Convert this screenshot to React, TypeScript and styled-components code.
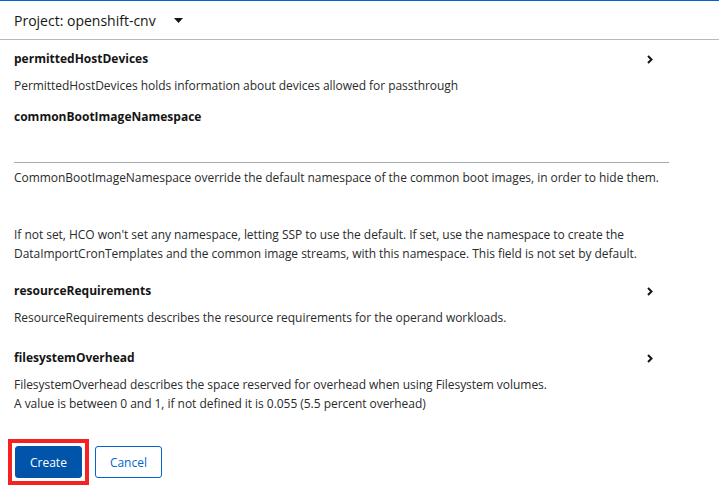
import React from "react";
import styled, { createGlobalStyle } from "styled-components";

const GlobalStyle = createGlobalStyle`
  html, body {
    margin: 0;
    padding: 0;
    background: #fff;
  }
  body {
    font-family: "Open Sans", "Noto Sans", sans-serif;
    color: #151515;
  }
`;

interface FieldData {
  name: string;
  description: string;
  expandable?: boolean;
  input?: boolean;
  spaceAfter: number;
}

const fields: FieldData[] = [
  {
    name: "permittedHostDevices",
    description:
      "PermittedHostDevices holds information about devices allowed for passthrough",
    expandable: true,
    spaceAfter: 12,
  },
  {
    name: "commonBootImageNamespace",
    description:
      "CommonBootImageNamespace override the default namespace of the common boot images, in order to hide them.\n\n\nIf not set, HCO won't set any namespace, letting SSP to use the default. If set, use the namespace to create the DataImportCronTemplates and the common image streams, with this namespace. This field is not set by default.",
    input: true,
    spaceAfter: 18,
  },
  {
    name: "resourceRequirements",
    description:
      "ResourceRequirements describes the resource requirements for the operand workloads.",
    expandable: true,
    spaceAfter: 21,
  },
  {
    name: "filesystemOverhead",
    description:
      "FilesystemOverhead describes the space reserved for overhead when using Filesystem volumes.\nA value is between 0 and 1, if not defined it is 0.055 (5.5 percent overhead)",
    expandable: true,
    spaceAfter: 0,
  },
];

const CaretDown = () => (
  <svg width="9" height="5" viewBox="0 0 9 5">
    <path d="M0 0 L9 0 L4.5 5 Z" fill="#151515" />
  </svg>
);

const ChevronRight = () => (
  <svg width="6" height="9" viewBox="0 0 6 9">
    <path
      d="M1 1 L4.5 4.5 L1 8"
      fill="none"
      stroke="#151515"
      strokeWidth="2"
    />
  </svg>
);

export default function App() {
  return (
    <>
      <GlobalStyle />
      <Page>
        <ProjectBar>
          <ProjectToggle>
            Project: openshift-cnv
            <CaretDown />
          </ProjectToggle>
        </ProjectBar>
        <Form>
          {fields.map((f) => (
            <Field key={f.name} $spaceAfter={f.spaceAfter}>
              <FieldHeader>
                <FieldName>{f.name}</FieldName>
                {f.expandable && (
                  <ExpandButton>
                    <ChevronRight />
                  </ExpandButton>
                )}
              </FieldHeader>
              {f.input && <TextInput type="text" />}
              <Description $afterInput={!!f.input}>{f.description}</Description>
            </Field>
          ))}
          <ButtonRow>
            <Highlight>
              <PrimaryButton>Create</PrimaryButton>
            </Highlight>
            <SecondaryButton>Cancel</SecondaryButton>
          </ButtonRow>
        </Form>
      </Page>
    </>
  );
}

const Page = styled.div`
  width: 719px;
  min-height: 498px;
  border-top: 1px solid #0066cc;
  box-sizing: border-box;
`;

const ProjectBar = styled.div`
  height: 38px;
  border-bottom: 1px solid #b8bbbe;
  display: flex;
  align-items: center;
  padding: 0 14px;
`;

const ProjectToggle = styled.div`
  display: flex;
  align-items: center;
  gap: 18px;
  font-size: 14px;
  color: #151515;
`;

const Form = styled.div`
  width: 655px;
  padding: 9px 14px 0;
`;

const Field = styled.div<{ $spaceAfter: number }>`
  margin-bottom: ${(p) => p.$spaceAfter}px;
`;

const FieldHeader = styled.div`
  display: flex;
  justify-content: space-between;
  align-items: center;
  height: 20px;
  padding-right: 16px;
`;

const FieldName = styled.div`
  font-size: 12px;
  font-weight: 700;
  line-height: 20px;
`;

const ExpandButton = styled.span`
  display: flex;
  align-items: center;
`;

const TextInput = styled.input`
  display: block;
  width: 100%;
  height: 35px;
  margin-top: 1px;
  box-sizing: border-box;
  border: none;
  border-bottom: 1px solid #a8abae;
  outline: none;
  background: transparent;
`;

const Description = styled.div<{ $afterInput: boolean }>`
  margin-top: ${(p) => (p.$afterInput ? 5 : 7)}px;
  font-size: 12px;
  line-height: 19px;
  letter-spacing: -0.04px;
  white-space: pre-wrap;
  color: #2a2b2c;
`;

const ButtonRow = styled.div`
  display: flex;
  align-items: center;
  gap: 6px;
  margin-top: 26px;
  margin-left: -6px;
`;

const Highlight = styled.div`
  border: 4px solid #f42222;
  padding: 3px;
  display: flex;
`;

const BaseButton = styled.button`
  height: 32px;
  padding: 0 14px;
  border-radius: 3px;
  font-family: "Open Sans", "Noto Sans", sans-serif;
  font-size: 12px;
  cursor: pointer;
`;

const PrimaryButton = styled(BaseButton)`
  background: #0055aa;
  border: 1px solid #0055aa;
  color: #fff;
`;

const SecondaryButton = styled(BaseButton)`
  background: #fff;
  border: 1px solid #0066cc;
  color: #0066cc;
`;
